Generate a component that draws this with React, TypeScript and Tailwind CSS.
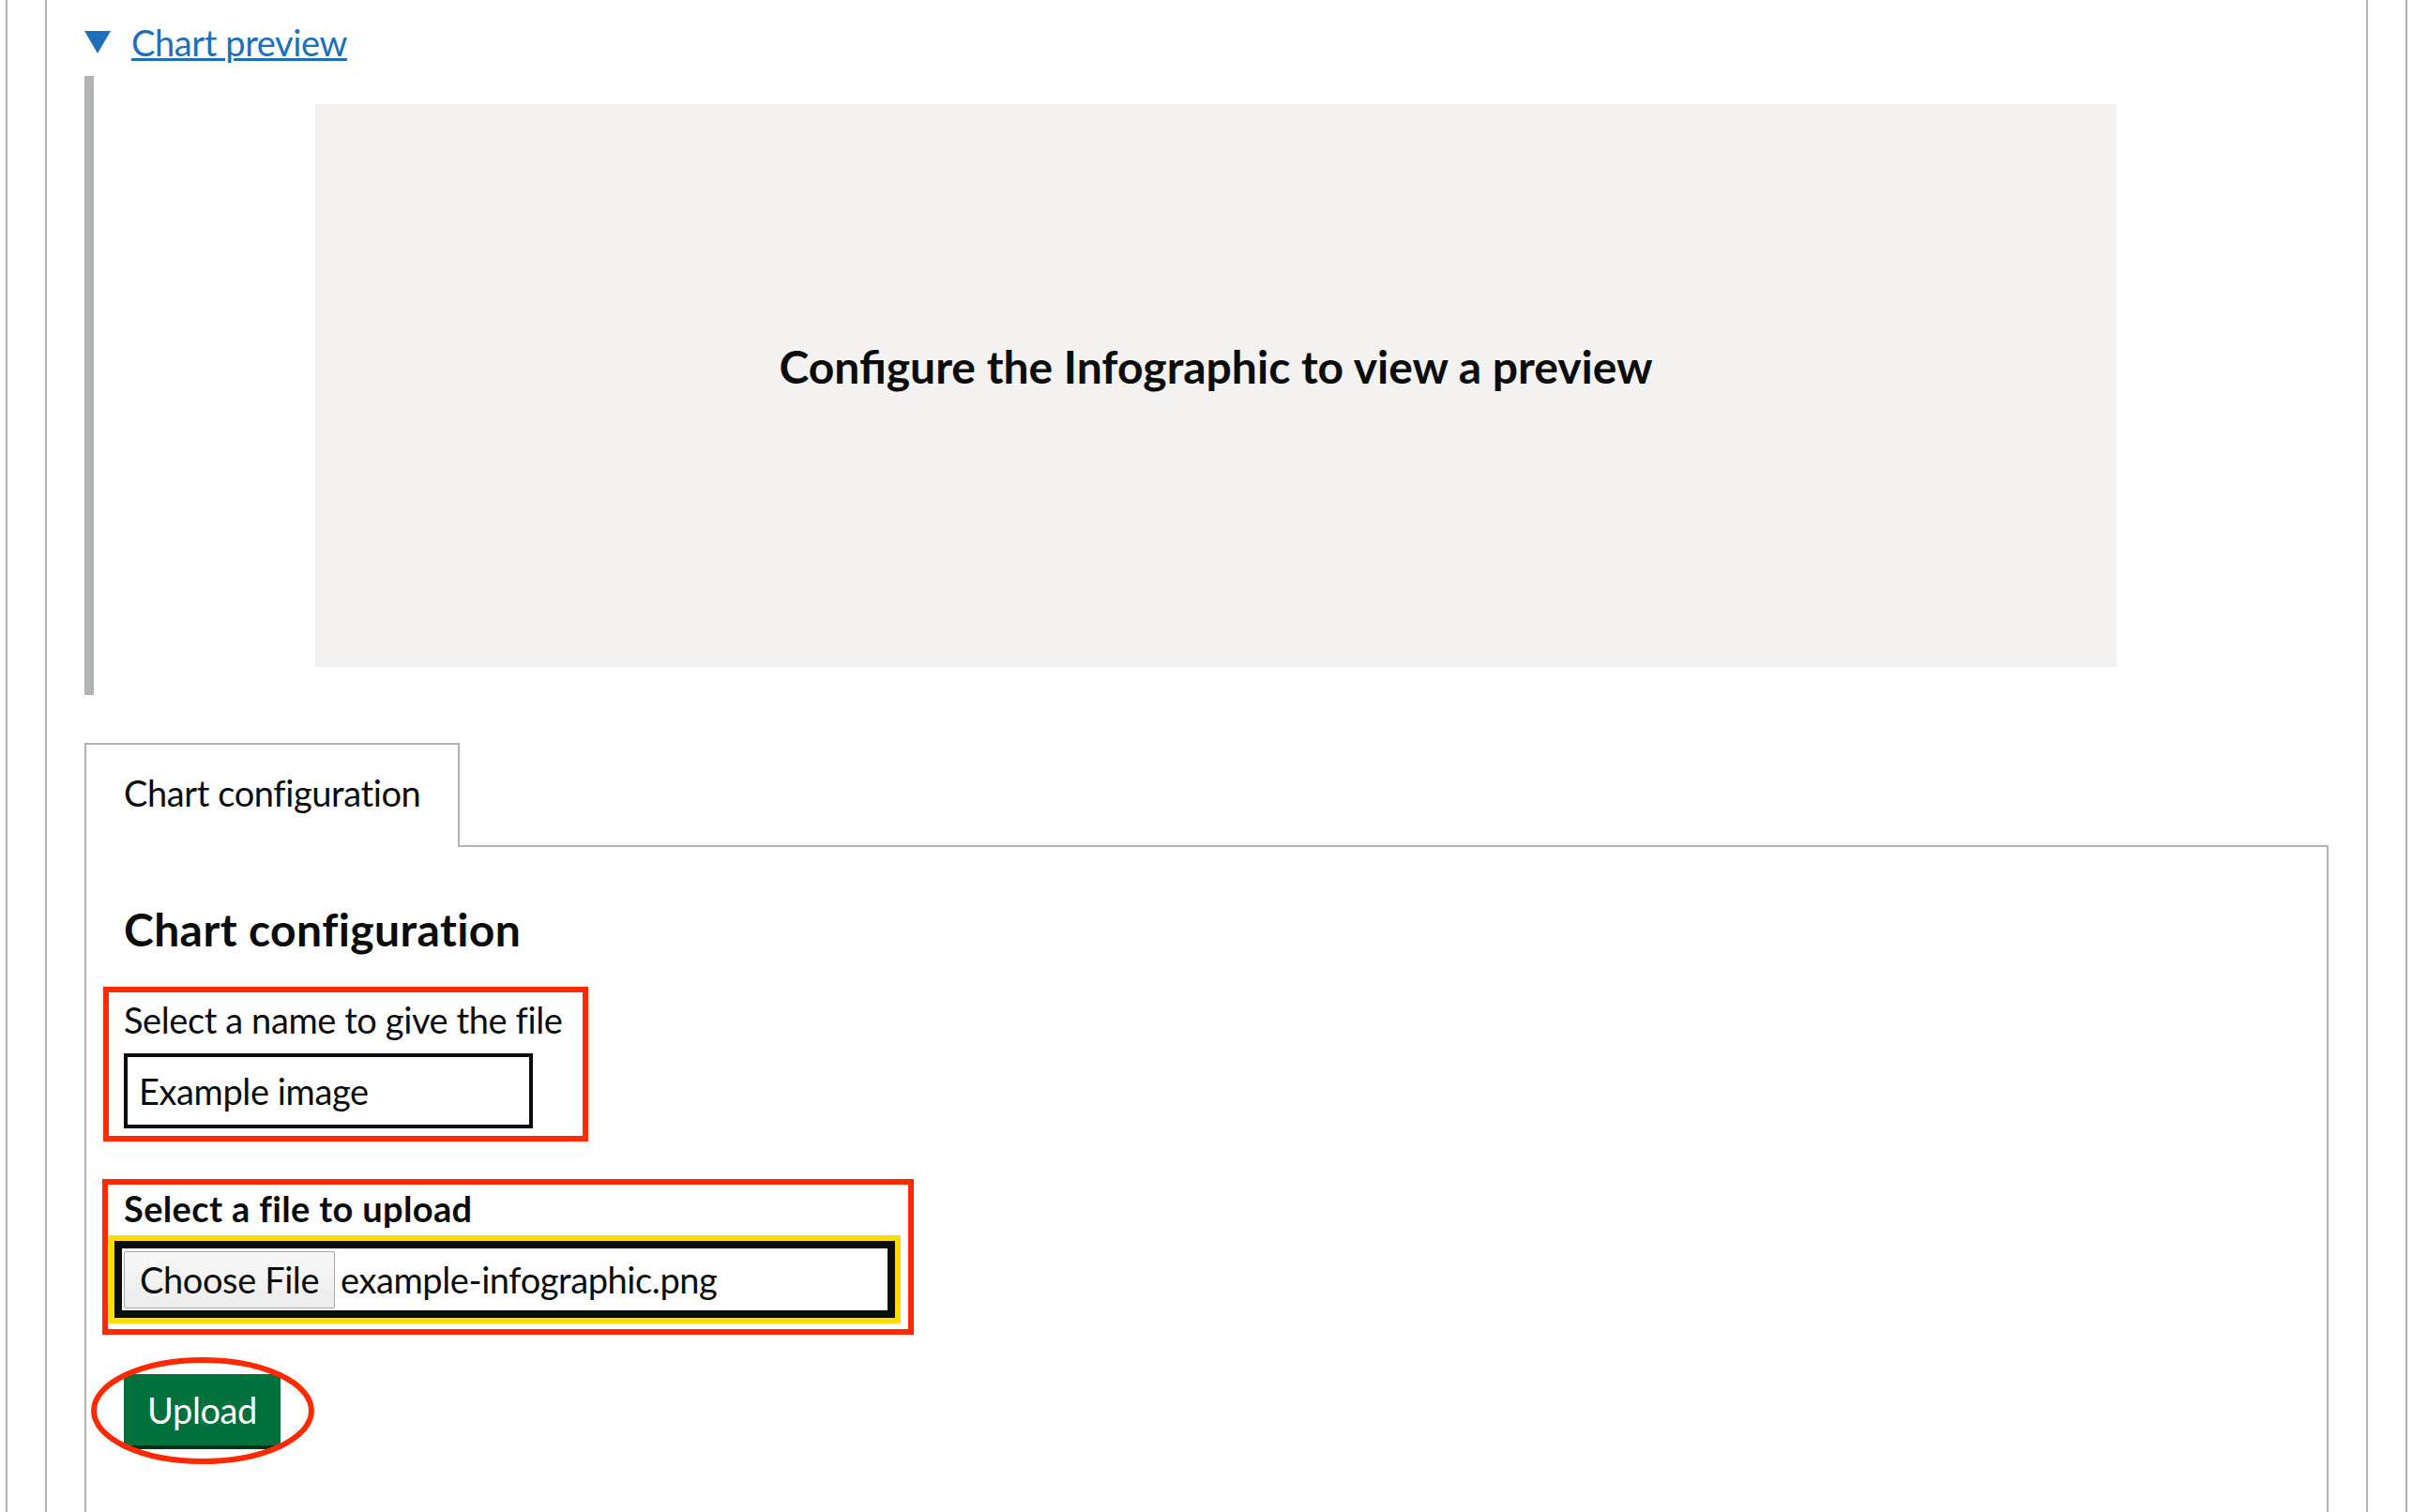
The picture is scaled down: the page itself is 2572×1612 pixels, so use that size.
import React from "react";

export default function App() {
  return (
    <div className="w-[2572px] h-[1612px] overflow-hidden bg-white font-['Lato',sans-serif] text-[#0b0c0c]">
      <div className="ml-[6px] w-[2560px] h-full border-x-2 border-[#b1b4b6] px-[40px]">
        <div className="h-full border-x-2 border-[#b1b4b6] px-[40px] flex flex-col">
          {/* Details summary */}
          <div className="pt-[20px] flex items-start">
            <div className="w-[50px] pt-[13px]">
              <svg width="28" height="24" viewBox="0 0 28 24">
                <polygon points="0,0 28,0 14,24" fill="#1d70b8" />
              </svg>
            </div>
            <a
              href="#"
              className="text-[38px] leading-[50px] tracking-[-0.4px] text-[#1d70b8] underline decoration-[3px] underline-offset-[2px]"
            >
              Chart preview
            </a>
          </div>

          {/* Details text */}
          <div className="mt-[11px] border-l-[10px] border-[#b1b4b6] py-[30px] pl-[236px]">
            <div className="w-[1920px] h-[600px] bg-[#f3f2f1] flex items-center justify-center">
              <h2 className="text-[48px] leading-[60px] font-bold mb-[40px]">
                Configure the Infographic to view a preview
              </h2>
            </div>
          </div>

          {/* Tabs */}
          <div className="mt-[51px] flex">
            <div className="w-[400px] h-[111px] border-t-2 border-x-2 border-[#b1b4b6] bg-white pt-[26px] pl-[40px] text-[38px] leading-[50px] tracking-[-0.4px]">
              Chart configuration
            </div>
            <div className="flex-1 border-b-2 border-[#b1b4b6]" />
          </div>

          {/* Panel */}
          <div className="flex-1 border-x-2 border-[#b1b4b6] px-[40px] pt-[58px]">
            <h2 className="text-[48px] leading-[60px] font-bold tracking-[0.4px]">Chart configuration</h2>

            {/* Name field */}
            <div className="mt-[31px] -ml-[22px] w-[517px] border-[6px] border-[#ff2a00] pl-[16px] pt-[4px] pb-[8px]">
              <label className="block text-[38px] leading-[50px] tracking-[-0.4px]">Select a name to give the file</label>
              <div className="mt-[11px] w-[436px] h-[80px] border-4 border-[#0b0c0c] pl-[12px] flex items-center text-[38px] tracking-[-0.4px]">
                Example image
              </div>
            </div>

            {/* File field */}
            <div className="mt-[40px] -ml-[23px] w-[865px] border-[6px] border-[#ff2a00] pl-[17px] pb-[12px]">
              <label className="block text-[38px] leading-[50px] font-bold tracking-[0.35px]">Select a file to upload</label>
              <div className="mt-[10px] -ml-[10px] w-[832px] h-[82px] p-[10px] flex items-center shadow-[0_0_0_6px_#ffdd00,inset_0_0_0_8px_#0b0c0c]">
                <button className="w-[225px] h-[61px] shrink-0 border border-[#a8a8a8] rounded-[2px] bg-linear-to-b from-[#f8f8f8] to-[#ececec] pl-[16px] text-left text-[38px] leading-[59px] tracking-[-0.4px] text-[#0b0c0c]">
                  Choose File
                </button>
                <span className="ml-[6px] text-[38px] leading-[50px] tracking-[-0.4px]">example-infographic.png</span>
              </div>
            </div>

            {/* Upload button */}
            <div className="mt-[42px] relative w-[167px]">
              <button className="w-[167px] h-[76px] bg-[#00703c] text-white text-[38px] leading-[76px] tracking-[-0.4px] text-center shadow-[0_4px_0_#002d18]">
                Upload
              </button>
              <svg
                className="absolute left-[-35px] top-[-18px] pointer-events-none"
                width="238"
                height="115"
                viewBox="0 0 238 115"
              >
                <ellipse cx="119" cy="57" rx="116" ry="54" fill="none" stroke="#ff2a00" strokeWidth="6" />
              </svg>
            </div>
          </div>
        </div>
      </div>
    </div>
  );
}
